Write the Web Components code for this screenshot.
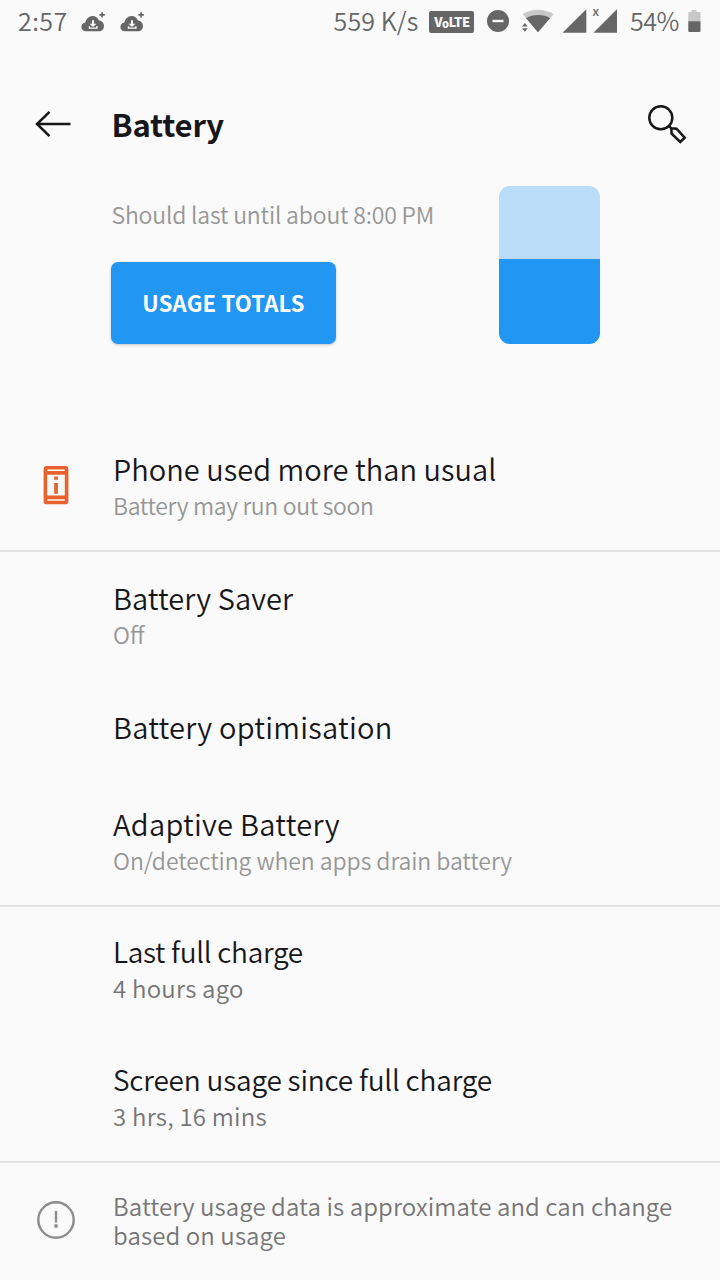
<!DOCTYPE html>
<html lang="en">
<head>
<meta charset="utf-8">
<title>Battery</title>
<style>
  html, body { margin: 0; background: #fafafa; }
  body { width: 720px; height: 1280px; overflow: hidden; font-family: "Noto Sans CJK SC", "Noto Sans", sans-serif; }
</style>
</head>
<body>
<battery-screen></battery-screen>
<script>
const define = (name, html) => {
  const t = document.createElement('template');
  t.innerHTML = html;
  customElements.define(name, class extends HTMLElement {
    constructor() {
      super();
      this.attachShadow({ mode: 'open' }).append(t.content.cloneNode(true));
    }
  });
};

define('cloud-icon', `
<style>:host{display:block;width:26px;height:22px}svg{display:block}</style>
<svg width="26" height="22" viewBox="0 0 26 22">
  <path fill="#666" d="M5.500 20.300C2.600 20.300.4 18.500.4 15.900c0-2.300 1.600-4 3.900-4.300C5 8 7.900 4.900 11.500 4.900c3.200 0 5.500 1.700 6.500 4.700 3 .3 5 2.500 5 5.400 0 3.100-2.200 5.300-5 5.300z"/>
  <path fill="#fafafa" d="M11 9.200h2v3.500h2.500L12 16l-3.500-3.300H11zM7.800 15.200h1.400v1.200h5.800v-1.200h1.600v2.600H7.800z"/>
  <path stroke="#666" stroke-width="1.700" d="M21.100 1.200v5.400M18.400 3.900h5.400"/>
</svg>`);

define('status-bar', `
<style>
  :host{display:flex;align-items:center;height:44px;padding:0 19px 0 18px;box-sizing:border-box;color:#666;font-size:25px;font-weight:350;white-space:nowrap}
  svg{display:block;flex:none}
  .clock,.rate,.pct{align-self:flex-start;line-height:40px}
  .clock{width:63px;letter-spacing:.4px}
  cloud-icon{margin-right:13px}
  .spacer{flex:1}
  .rate{letter-spacing:.1px;margin-right:11px}
  .volte{width:45px;height:22px;box-sizing:border-box;border-radius:2px;background:#666;color:#fafafa;font:900 13px/21px "Noto Sans CJK SC",sans-serif;text-align:center;letter-spacing:-.5px;margin-right:13px}
  .volte span{font-size:11px;position:relative;top:1px}
  .dnd{margin:-2px 11px 0 0}
  .pct{letter-spacing:-.4px;margin:0 9px 0 1.500px}
</style>
<span class="clock">2:57</span><cloud-icon></cloud-icon><cloud-icon></cloud-icon><span class="spacer"></span>
<span class="rate">559 K/s</span>
<span class="volte">V<span>o</span>LTE</span>
<svg class="dnd" width="22" height="22" viewBox="0 0 22 22"><circle cx="11" cy="11" r="11" fill="#666"/><path d="M5.500 11h11" stroke="#fafafa" stroke-width="2.400"/></svg>
<svg width="108" height="44" viewBox="0 -5 108 44">
  <path fill="#c8c8c8" d="M2.700 9.300C11 3.300 25 3.300 33.500 9.300L18 27.300z"/>
  <path fill="#666" d="M6 13.300C13 8.900 24 8.900 30 13.300L18 27.300z"/>
  <path fill="#666" d="M2 21.600L4.900 18l2.900 3.600zM2 23.200l2.900 3.600 2.900-3.600z"/>
  <path fill="#666" d="M66.300 4.300v23.500H42.500z"/><path fill="#666" d="M97 4.300v23.500H73.500z"/>
  <text x="72.600" y="10.500" font-size="12.500" font-weight="500" fill="#666" font-family="Noto Sans CJK SC">x</text>
</svg>
<span class="pct">54%</span>
<svg width="13" height="24" viewBox="0 0 13 24" style="margin-top:-2px"><path fill="#c8c8c8" d="M3.500 1h5v2h4v9.500H.3V3h3.200z"/><path fill="#666" d="M.3 12.300h12.200V22a1 1 0 0 1-1 1H1.300a1 1 0 0 1-1-1z"/></svg>
`);

define('app-bar', `
<style>
  :host{display:flex;align-items:center;height:82px;padding:0 32px 0 34px;margin-top:40px;box-sizing:border-box;color:#17171a}
  .back{width:77.500px}
  .back svg{margin-top:-4px}
  h1{flex:1;margin:0;font-size:31px;font-weight:700;line-height:40px;letter-spacing:-.15px;padding-bottom:2px}
  svg{display:block}
</style>
<div class="back"><svg width="38" height="30" viewBox="0 0 38 30" fill="none" stroke="#17171a" stroke-width="2.500"><path d="M36.500 16H3M15.500 3.800L3 16l12.500 12.200"/></svg></div>
<h1><slot></slot></h1>
<svg width="42" height="42" viewBox="0 0 42 42" fill="none" stroke="#17171a" stroke-width="2.500"><circle cx="14.800" cy="13.700" r="11.500"/><path d="M22.900 21.900l2.400 2.400M25.300 24.300l5.200.4 8.200 9-4.400 4.200-8.700-8.300z"/></svg>
`);

define('usage-button', `
<style>
  :host{display:block;width:225px;height:82px;border-radius:7px;background:#2196f3;color:#fff;font-size:22px;font-weight:700;line-height:81px;text-align:center;letter-spacing:.2px;box-shadow:0 1px 3px rgba(0,0,0,.22)}
</style><slot></slot>`);

define('battery-meter', `
<style>:host{display:block;width:101px;height:157.500px;border-radius:11px;overflow:hidden;background:#b9dcf8}
.level{height:85px;margin-top:73px;background:#2196f3}</style><div class="level"></div>`);

define('battery-summary', `
<style>
  :host{display:flex;align-items:flex-start;height:256px;padding:20px 120px 0 111px;box-sizing:border-box}
  .info{flex:1}
  p{margin:11px 0 31px .5px;font-size:23px;line-height:34px;font-weight:350;letter-spacing:-.18px;color:#969696}
</style>
<div class="info"><p><slot></slot></p><usage-button>USAGE TOTALS</usage-button></div><battery-meter></battery-meter>`);

define('setting-row', `
<style>
  :host{display:grid;grid-template-columns:113px 1fr;box-sizing:border-box;height:128px;padding-top:25px;align-content:start}
  .icon{grid-row:1/3;padding:18px 0 0 36px}
  ::slotted(svg){display:block}
  .title{grid-column:2;font-size:29px;line-height:40px;font-weight:350;letter-spacing:var(--ts,.4px);color:#17171a;white-space:nowrap}
  .sub{grid-column:2;font-size:23px;line-height:35px;font-weight:350;letter-spacing:var(--ss,0px);color:#969696;white-space:nowrap}
  :host([short]){height:97px}
  :host([info]) .title{font-size:28px;letter-spacing:var(--ts,-.2px)}
  :host([info]) .sub{font-size:24px;line-height:34px;color:#757575;letter-spacing:.22px}
</style>
<div class="icon"><slot name="icon"></slot></div>
<div class="title"><slot></slot></div><div class="sub"><slot name="sub"></slot></div>`);

define('row-divider', `<style>:host{display:block;height:2px;background:#e3e3e3}</style>`);

define('foot-note', `
<style>
  :host{display:grid;grid-template-columns:113px 1fr;padding-top:28px;color:#757575;font-size:24px;font-weight:350;line-height:29px;letter-spacing:.1px}
  svg{display:block;margin:9px 0 0 36px}
</style>
<svg width="40" height="40" viewBox="0 0 40 40" fill="none" stroke="#8c8c8c" stroke-width="2.400"><circle cx="20" cy="20" r="17.700"/><path d="M20 11v11.500"/><circle cx="20" cy="26" r="1.900" fill="#8c8c8c" stroke="none"/></svg>
<div><slot></slot></div>`);

define('battery-screen', `
<style>:host{display:flex;flex-direction:column;width:720px;height:1280px;background:#fafafa;overflow:hidden}
:host>*{flex:none}</style>
<status-bar></status-bar>
<app-bar>Battery</app-bar>
<battery-summary>Should last until about 8:00 PM</battery-summary>
<setting-row style="--ts:.04px;--ss:-.34px;padding-top:26px">
  <svg slot="icon" width="40" height="40" viewBox="0 0 40 40"><path fill="#e8622f" fill-rule="evenodd" d="M10.500 0h19a2.900 2.900 0 0 1 2.900 2.900v32.400a2.900 2.900 0 0 1-2.900 2.900h-19a2.900 2.900 0 0 1-2.900-2.900V2.900A2.900 2.900 0 0 1 10.500 0zM11.200 3.500v1.600h17.600V3.500zM11.200 8.800v20.800h17.600V8.800zM11.200 33.200v1.600h17.600v-1.600z"/><path fill="#e8622f" d="M18.200 10.500h3.700v3.300h-3.700zM18.200 17h3.700v10.800h-3.700z"/></svg>
  Phone used more than usual<span slot="sub">Battery may run out soon</span>
</setting-row>
<row-divider></row-divider>
<setting-row style="--ts:.08px">Battery Saver<span slot="sub">Off</span></setting-row>
<setting-row short style="--ts:.24px;padding-top:26px">Battery optimisation</setting-row>
<setting-row style="--ts:.3px;--ss:-.07px;padding-top:26px">Adaptive Battery<span slot="sub">On/detecting when apps drain battery</span></setting-row>
<row-divider></row-divider>
<setting-row info style="--ts:-.3px;padding-top:24px">Last full charge<span slot="sub">4 hours ago</span></setting-row>
<setting-row info style="padding-top:24px;height:126px">Screen usage since full charge<span slot="sub">3 hrs, 16 mins</span></setting-row>
<row-divider></row-divider>
<foot-note>Battery usage data is approximate and can change<br>based on usage</foot-note>
`);
</script>
</body>
</html>
